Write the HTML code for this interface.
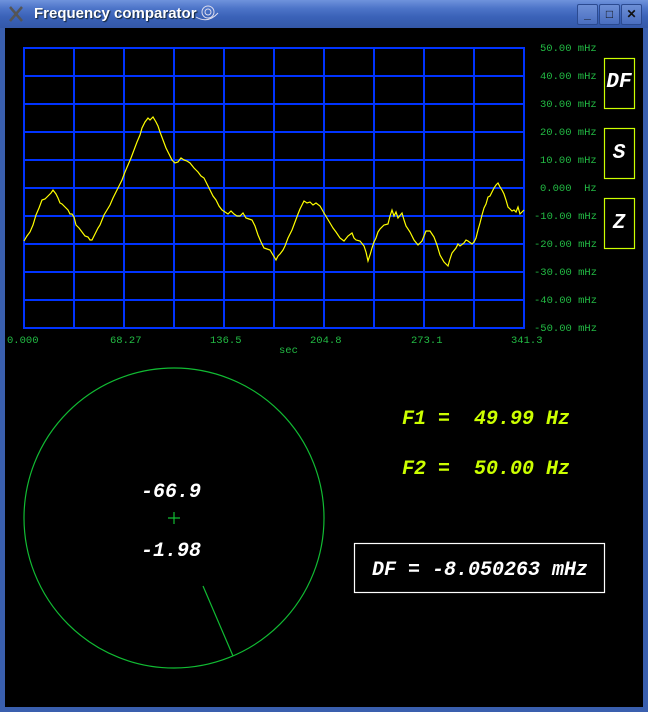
<!DOCTYPE html>
<html><head><style>
html,body{margin:0;padding:0;background:#000;}
body{width:648px;height:712px;overflow:hidden;position:relative;font-family:"Liberation Sans",sans-serif;}
.tb{position:absolute;left:0;top:0;width:648px;height:28px;background:linear-gradient(#6f93dc 0%,#4d74c8 30%,#3a62b8 60%,#3458a8 100%);}
.title{position:absolute;left:34px;top:5px;color:#fff;font-weight:bold;font-size:15px;text-shadow:1px 1px 1px #123;}
.btn{position:absolute;top:4px;width:19px;height:19px;border:1px solid #2b4a90;border-radius:2px;background:linear-gradient(#6d8fd6,#4a6ec0);color:#111;font-size:12px;text-align:center;line-height:19px;font-weight:bold;}
svg{position:absolute;left:0;top:0;}
svg text{white-space:pre;}
</style></head><body>
<div class="tb"></div>
<div style="position:absolute;left:0;top:28px;width:5px;height:684px;background:#3a5fae"></div>
<div style="position:absolute;right:0;top:28px;width:5px;height:684px;background:#3a5fae"></div>
<div style="position:absolute;left:0;top:707px;width:648px;height:5px;background:#3a5fae"></div>
<div class="title">Frequency comparator</div>
<div class="btn" style="left:577px">_</div>
<div class="btn" style="left:599px">□</div>
<div class="btn" style="left:621px">✕</div>
<svg width="648" height="712" xmlns="http://www.w3.org/2000/svg" xml:space="preserve">
<g stroke="#555" stroke-width="2.5"><line x1="10" y1="7" x2="22" y2="21"/><line x1="22" y1="7" x2="10" y2="21"/></g>
<g fill="none" stroke="#dde" stroke-width="1"><circle cx="208" cy="12" r="6"/><circle cx="208" cy="12" r="3"/><path d="M196 17 Q208 24 218 13"/></g>
<g stroke="#0033ff" stroke-width="2" fill="none">
<rect x="24" y="48" width="500" height="280"/>
<path d="M74 48V328M124 48V328M174 48V328M224 48V328M274 48V328M324 48V328M374 48V328M424 48V328M474 48V328M24 76H524M24 104H524M24 132H524M24 160H524M24 188H524M24 216H524M24 244H524M24 272H524M24 300H524"/>
</g>
<polyline fill="none" stroke="#ffff00" stroke-width="1.2" points="24,241 27,236 30,232 33,225 36,215 39,208 42,200 45,199 48,196 51,193 53,190 56,194 58,198 60,203 62,204 65,207 68,210 70,214 72,214 74,217 76,225 79,228 82,232 85,236 88,237 90,240 92,240 94,236 96,232 98,228 100,225 102,220 104,215 107,210 110,205 113,198 116,192 119,186 122,180 125,172 128,165 131,158 134,150 137,142 140,135 142,128 145,122 148,118 150,120 153,117 156,122 158,126 160,132 163,140 166,148 169,154 172,160 175,163 178,162 181,158 184,160 187,161 190,163 194,168 198,172 201,176 204,178 207,184 210,190 213,196 216,200 219,206 222,210 225,212 228,214 231,211 234,214 237,216 240,216 243,213 246,218 249,219 252,220 255,226 258,235 261,242 264,248 267,249 270,250 273,255 276,260 278,256 280,254 283,250 285,246 288,238 292,230 295,222 298,214 300,209 304,201 307,203 310,202 313,205 316,203 320,206 324,213 327,218 330,223 333,228 336,232 340,238 344,241 348,236 352,233 354,238 356,240 360,241 364,246 366,252 368,261 370,255 372,248 374,242 376,238 378,232 380,229 384,225 388,224 390,216 392,210 394,216 396,212 398,218 402,213 404,220 406,226 410,232 414,240 418,245 422,241 424,236 426,231 430,231 432,234 434,237 437,245 440,255 444,262 446,264 448,266 450,259 452,253 456,248 458,244 460,246 464,243 466,240 468,241 472,244 474,242 476,238 478,230 480,223 482,215 484,208 486,204 488,197 490,196 492,192 494,188 496,185 498,183 500,187 502,190 504,194 506,200 508,207 510,209 512,211 514,210 516,212 518,207 520,214 522,212 524,210"/>
<g font-family="Liberation Mono,monospace" font-size="10.5" fill="#22bb44">
<text x="540" y="51">50.00 mHz</text><text x="540" y="79">40.00 mHz</text><text x="540" y="107">30.00 mHz</text><text x="540" y="135">20.00 mHz</text><text x="540" y="163">10.00 mHz</text><text x="540" y="191">0.000  Hz</text><text x="534" y="219">-10.00 mHz</text><text x="534" y="247">-20.00 mHz</text><text x="534" y="275">-30.00 mHz</text><text x="534" y="303">-40.00 mHz</text><text x="534" y="331">-50.00 mHz</text>
<text x="7" y="343">0.000</text><text x="110" y="343">68.27</text><text x="210" y="343">136.5</text><text x="310" y="343">204.8</text><text x="411" y="343">273.1</text><text x="511" y="343">341.3</text>
<text x="279" y="353">sec</text>
</g>
<g stroke="#ccff00" stroke-width="1.2" fill="none">
<rect x="604.5" y="58.5" width="30" height="50"/><rect x="604.5" y="128.5" width="30" height="50"/><rect x="604.5" y="198.5" width="30" height="50"/>
</g>
<g font-family="Liberation Mono,monospace" font-style="italic" font-weight="bold" fill="#fff" font-size="21" text-anchor="middle">
<text x="619" y="87">DF</text><text x="619" y="158">S</text><text x="619" y="228">Z</text>
</g>
<circle cx="174" cy="518" r="150" fill="none" stroke="#11bb33" stroke-width="1.2"/>
<path d="M168 518H180M174 512V524" stroke="#11bb33" stroke-width="1.2"/>
<line x1="203" y1="586" x2="233" y2="656" stroke="#11bb33" stroke-width="1.2"/>
<g font-family="Liberation Mono,monospace" font-style="italic" font-weight="bold" font-size="20">
<text x="141" y="497" fill="#fff">-66.9</text>
<text x="141" y="556" fill="#fff">-1.98</text>
<text x="402" y="424" fill="#ccff00">F1 =  49.99 Hz</text>
<text x="402" y="474" fill="#ccff00">F2 =  50.00 Hz</text>
<text x="372" y="575" fill="#fff">DF = -8.050263 mHz</text>
</g>
<rect x="354.5" y="543.5" width="250" height="49" fill="none" stroke="#fff" stroke-width="1.2"/>
</svg>
</body></html>
